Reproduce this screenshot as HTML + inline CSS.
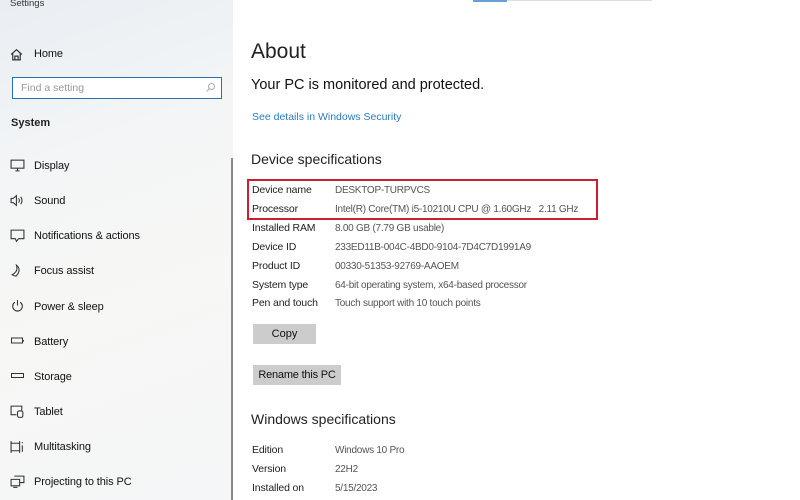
<!DOCTYPE html>
<html><head><meta charset="utf-8"><style>
*{margin:0;padding:0;box-sizing:border-box}
body{width:800px;height:500px;overflow:hidden;background:#fff;font-family:"Liberation Sans",sans-serif;position:relative;color:#111}
.side{position:absolute;left:0;top:0;width:233px;height:500px;background:linear-gradient(160deg,#e9eef3 0%,#f3f5f6 30%,#f7f7f5 60%,#f4f6f7 100%)}
.a{position:absolute;white-space:nowrap}
.ni{font-size:11px;color:#111;letter-spacing:-0.1px}
.ic{position:absolute;left:10px;width:14px;height:12px}
.lbl{font-size:10.5px;color:#222;position:absolute;left:252px;letter-spacing:-0.15px}
.val{font-size:10px;color:#555;position:absolute;left:335px;letter-spacing:-0.25px;top:1px}
.btn{position:absolute;background:#cccccc;font-size:11px;color:#111;text-align:center;line-height:20px}
</style></head><body>
<div class="side"></div>
<div class="a" style="left:10px;top:-2px;font-size:9.5px;color:#333">Settings</div>
<svg class="a" style="left:9px;top:47px" width="15" height="15" viewBox="0 0 14 14" fill="none" stroke="#333" stroke-width="1.1"><path d="M2 7 L7 2.5 L12 7 M3.5 6 V12 H10.5 V6 M5.5 12 V8.5 H8.5 V12"/></svg>
<div class="a ni" style="left:34px;top:48px">Home</div>
<div class="a" style="left:12px;top:77px;width:210px;height:22px;border:1.5px solid #2a6fb0;background:#fff"></div>
<div class="a" style="left:21px;top:82px;font-size:10.5px;color:#999">Find a setting</div>
<svg class="a" style="left:205px;top:82px" width="11" height="11" viewBox="0 0 11 11" fill="none" stroke="#aaa" stroke-width="1"><circle cx="6.5" cy="4.5" r="3"/><path d="M4.5 6.5 L1.5 9.5"/></svg>
<div class="a" style="left:11px;top:117px;font-size:11px;font-weight:bold;color:#222">System</div>
<div class="a" style="left:231px;top:158px;width:2px;height:342px;background:#8a8a8a"></div>

<svg class="a" style="left:10px;top:159px" width="15" height="13" viewBox="0 0 14 12" fill="none" stroke="#333" stroke-width="1"><rect x="1" y="1" width="12" height="7.5"/><path d="M5 11 H9 M7 8.5 V11"/></svg>
<div class="a ni" style="left:34px;top:160px">Display</div>
<svg class="a" style="left:10px;top:194px" width="15" height="13" viewBox="0 0 14 12" fill="none" stroke="#333" stroke-width="1"><path d="M1 4 H3 L6 1.5 V10.5 L3 8 H1 Z M8 4 Q9.5 6 8 8 M10 2.5 Q12.5 6 10 9.5"/></svg>
<div class="a ni" style="left:34px;top:195px">Sound</div>
<svg class="a" style="left:10px;top:229px" width="15" height="14" viewBox="0 0 14 13" fill="none" stroke="#333" stroke-width="1"><path d="M1 1 H13 V9 H8 L6 11.5 L5 9 H1 Z"/></svg>
<div class="a ni" style="left:34px;top:230px">Notifications &amp; actions</div>
<svg class="a" style="left:10px;top:264px" width="15" height="14" viewBox="0 0 14 13" fill="none" stroke="#333" stroke-width="1"><path d="M6 1 Q11 5 6 11 Q4 11.5 2 10 Q8 7 6 1 Z"/></svg>
<div class="a ni" style="left:34px;top:265px">Focus assist</div>
<svg class="a" style="left:10px;top:299px" width="15" height="14" viewBox="0 0 14 13" fill="none" stroke="#333" stroke-width="1"><path d="M4.5 3 A4.5 4.5 0 1 0 9.5 3 M7 1 V6"/></svg>
<div class="a ni" style="left:34px;top:301px">Power &amp; sleep</div>
<svg class="a" style="left:10px;top:336px" width="15" height="10" viewBox="0 0 14 10" fill="none" stroke="#333" stroke-width="1"><rect x="1" y="2" width="11" height="5"/><path d="M13 4 V5.5"/></svg>
<div class="a ni" style="left:34px;top:336px">Battery</div>
<svg class="a" style="left:10px;top:372px" width="15" height="8" viewBox="0 0 14 8" fill="none" stroke="#333" stroke-width="1"><rect x="1" y="1.5" width="12" height="4"/></svg>
<div class="a ni" style="left:34px;top:371px">Storage</div>
<svg class="a" style="left:10px;top:405px" width="15" height="14" viewBox="0 0 14 13" fill="none" stroke="#333" stroke-width="1"><path d="M6 9 H1 V1 H11 V5"/><rect x="7" y="5.5" width="5" height="6" rx="1.5"/></svg>
<div class="a ni" style="left:34px;top:406px">Tablet</div>
<svg class="a" style="left:10px;top:440px" width="15" height="14" viewBox="0 0 14 13" fill="none" stroke="#333" stroke-width="1"><path d="M1 1 V12 M9 1 V12 M1 3 H9 M1 10 H9 M11.5 2 V3 M11.5 5 V11"/></svg>
<div class="a ni" style="left:34px;top:441px">Multitasking</div>
<svg class="a" style="left:10px;top:475px" width="15" height="13" viewBox="0 0 14 12" fill="none" stroke="#333" stroke-width="1"><path d="M4 1 H13 V7 H9 M1 4 H9 V10 H1 Z M3 11.5 H7"/></svg>
<div class="a ni" style="left:34px;top:476px">Projecting to this PC</div>

<div class="a" style="left:473px;top:0;width:34px;height:1.5px;background:#6a9fd6"></div>
<div class="a" style="left:507px;top:0;width:145px;height:1px;background:#ddd"></div>
<div class="a" style="left:251px;top:40px;font-size:21px;color:#222">About</div>
<div class="a" style="left:251px;top:77px;font-size:14.5px;color:#111">Your PC is monitored and protected.</div>
<div class="a" style="left:252px;top:111px;font-size:10.5px;color:#2a7bbf">See details in Windows Security</div>
<div class="a" style="left:251px;top:151px;font-size:14px;color:#222">Device specifications</div>
<div class="a" style="left:247px;top:179px;width:351px;height:41px;border:2.5px solid #c8202c"></div>
<div class="lbl" style="top:184px">Device name</div><div class="val" style="top:185px">DESKTOP-TURPVCS</div>
<div class="lbl" style="top:203px">Processor</div><div class="val" style="top:204px">Intel(R) Core(TM) i5-10210U CPU @ 1.60GHz &nbsp; 2.11 GHz</div>
<div class="lbl" style="top:222px">Installed RAM</div><div class="val" style="top:223px">8.00 GB (7.79 GB usable)</div>
<div class="lbl" style="top:241px">Device ID</div><div class="val" style="top:242px">233ED11B-004C-4BD0-9104-7D4C7D1991A9</div>
<div class="lbl" style="top:260px">Product ID</div><div class="val" style="top:261px">00330-51353-92769-AAOEM</div>
<div class="lbl" style="top:279px">System type</div><div class="val" style="top:280px">64-bit operating system, x64-based processor</div>
<div class="lbl" style="top:297px">Pen and touch</div><div class="val" style="top:298px">Touch support with 10 touch points</div>
<div class="btn" style="left:253px;top:324px;width:63px;height:20px">Copy</div>
<div class="btn" style="left:253px;top:365px;width:88px;height:20px;letter-spacing:-0.2px">Rename this PC</div>
<div class="a" style="left:251px;top:411px;font-size:14px;color:#222">Windows specifications</div>
<div class="lbl" style="top:444px">Edition</div><div class="val" style="top:445px">Windows 10 Pro</div>
<div class="lbl" style="top:463px">Version</div><div class="val" style="top:464px">22H2</div>
<div class="lbl" style="top:482px">Installed on</div><div class="val" style="top:483px">5/15/2023</div>
</body></html>
